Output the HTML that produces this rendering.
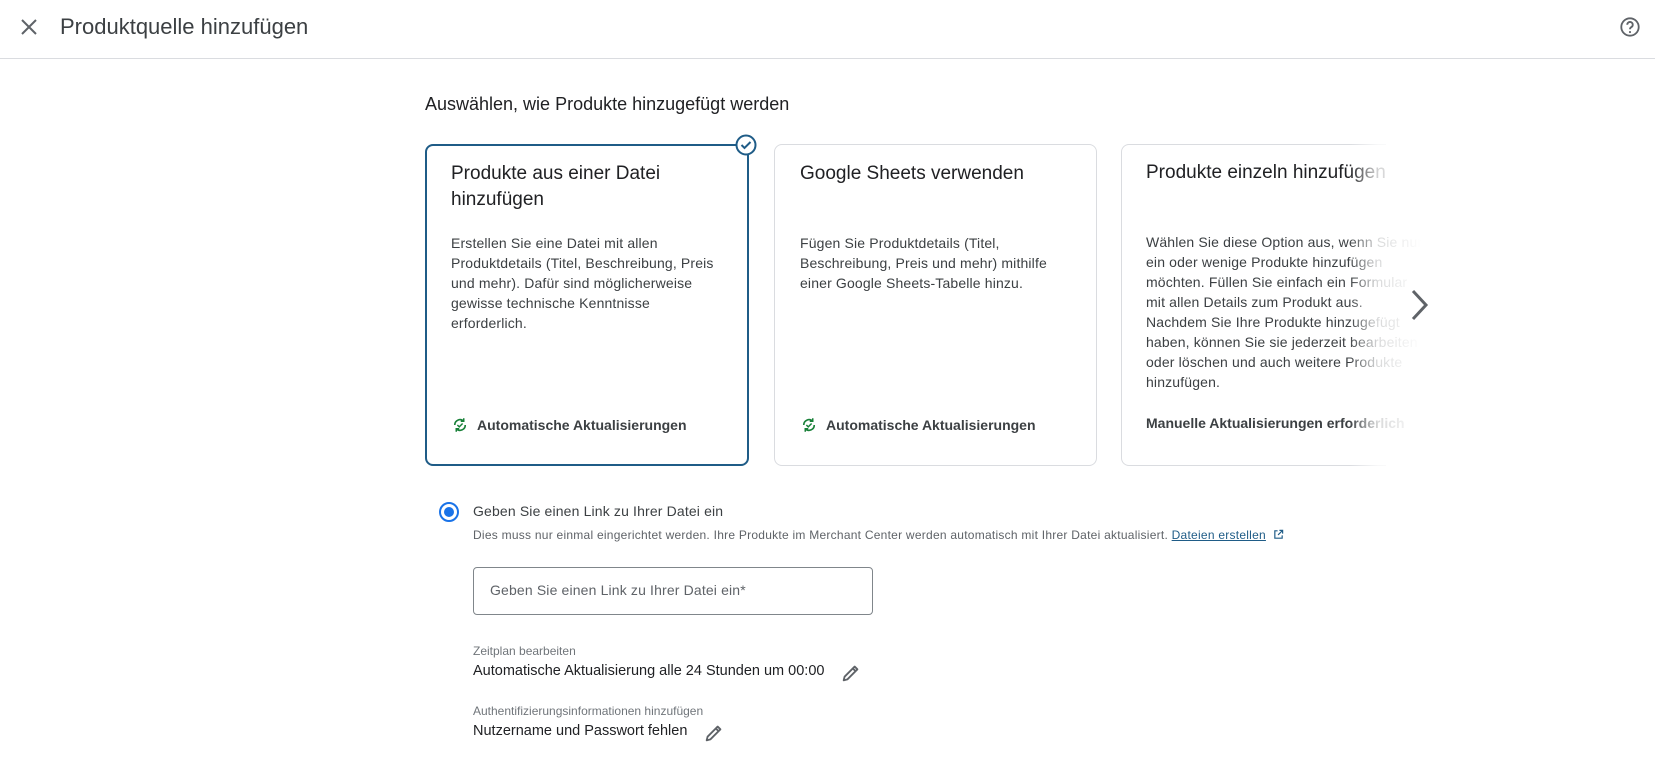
<!DOCTYPE html>
<html><head><meta charset="utf-8"><style>
*{margin:0;padding:0;box-sizing:border-box}
body{width:1655px;height:765px;overflow:hidden;background:#fff;font-family:"Liberation Sans",Arial,sans-serif;color:#202124;position:relative}
.abs{position:absolute}
.hdr{left:0;top:0;width:1655px;height:59px;border-bottom:1px solid #dadce0}
.card{position:absolute;top:144px;height:322px;border:1px solid #dadce0;border-radius:8px;background:#fff}
.card.sel{border:2px solid #1f5c87}
.ct{position:absolute;left:25px;top:16px;font-size:19px;line-height:26px;color:#202124;width:280px}
.cd{position:absolute;left:25px;top:88px;font-size:14px;line-height:20px;color:#3c4043;white-space:nowrap;letter-spacing:0.15px}
.cf{position:absolute;left:25px;top:271px;font-size:14px;font-weight:bold;color:#3c4043;display:flex;align-items:center;gap:8px;white-space:nowrap}
.lbl{font-size:12px;color:#70757a}
.val{font-size:14.5px;color:#202124}
</style></head><body>
<div class="abs hdr"></div>
<svg class="abs" style="left:19px;top:17px" width="20" height="20" viewBox="0 0 20 20"><path d="M3 3L17 17M17 3L3 17" stroke="#5f6368" stroke-width="2"/></svg>
<div class="abs" style="left:60px;top:14px;font-size:22px;color:#3c4043">Produktquelle hinzufügen</div>
<svg class="abs" style="left:1619px;top:16px" width="22" height="22" viewBox="0 0 24 24"><circle cx="12" cy="12" r="9.5" fill="none" stroke="#5f6368" stroke-width="2"/><path d="M9 9.5a3 3 0 1 1 4.5 2.6c-1 .6-1.5 1.2-1.5 2.4" fill="none" stroke="#5f6368" stroke-width="2"/><circle cx="12" cy="17.5" r="1.2" fill="#5f6368"/></svg>

<div class="abs" style="left:425px;top:94px;font-size:18px;color:#202124">Auswählen, wie Produkte hinzugefügt werden</div>

<div class="card sel" style="left:425px;width:324px">
<div class="ct" style="left:24px;top:15px">Produkte aus einer Datei<br>hinzufügen</div>
<div class="cd" style="left:24px;top:87px">Erstellen Sie eine Datei mit allen<br>Produktdetails (Titel, Beschreibung, Preis<br>und mehr). Dafür sind möglicherweise<br>gewisse technische Kenntnisse<br>erforderlich.</div>
<div class="cf" style="left:24px;top:270px"><svg width="18" height="18" viewBox="0 0 24 24"><path d="M5 12a7 7 0 0 1 12-5M19 12a7 7 0 0 1-12 5" fill="none" stroke="#188038" stroke-width="2.2"/><path d="M17 3v4h-4M7 21v-4h4" fill="none" stroke="#188038" stroke-width="2"/><path d="M8.5 12l2.5 2.5 4.5-4.5" fill="none" stroke="#188038" stroke-width="2"/></svg>Automatische Aktualisierungen</div>
</div>
<svg class="abs" style="left:735px;top:134px" width="22" height="22" viewBox="0 0 22 22"><circle cx="11" cy="11" r="9.5" fill="#fff" stroke="#1f5c87" stroke-width="2"/><path d="M6.5 11l3 3 6-6" fill="none" stroke="#1f5c87" stroke-width="2"/></svg>

<div class="card" style="left:774px;width:323px">
<div class="ct">Google Sheets verwenden</div>
<div class="cd" style="top:88px">Fügen Sie Produktdetails (Titel,<br>Beschreibung, Preis und mehr) mithilfe<br>einer Google Sheets-Tabelle hinzu.</div>
<div class="cf"><svg width="18" height="18" viewBox="0 0 24 24"><path d="M5 12a7 7 0 0 1 12-5M19 12a7 7 0 0 1-12 5" fill="none" stroke="#188038" stroke-width="2.2"/><path d="M17 3v4h-4M7 21v-4h4" fill="none" stroke="#188038" stroke-width="2"/><path d="M8.5 12l2.5 2.5 4.5-4.5" fill="none" stroke="#188038" stroke-width="2"/></svg>Automatische Aktualisierungen</div>
</div>

<div class="abs" style="left:1121px;top:144px;width:265px;height:322px;overflow:hidden">
<div class="card" style="left:0;top:0;width:323px"></div>
</div>
<div class="abs" style="left:1121px;top:144px;width:300px;height:322px;overflow:hidden">
<div class="ct" style="width:300px">Produkte einzeln hinzufügen</div>
<div class="cd" style="top:88px">Wählen Sie diese Option aus, wenn Sie nur<br>ein oder wenige Produkte hinzufügen<br>möchten. Füllen Sie einfach ein Formular<br>mit allen Details zum Produkt aus.<br>Nachdem Sie Ihre Produkte hinzugefügt<br>haben, können Sie sie jederzeit bearbeiten<br>oder löschen und auch weitere Produkte<br>hinzufügen.</div>
<div class="cf">Manuelle Aktualisierungen erforderlich</div>
<div class="abs" style="left:228px;top:0;width:72px;height:322px;background:linear-gradient(to right,rgba(255,255,255,0),rgba(255,255,255,0.8) 40%,#fff)"></div>
</div>
<svg class="abs" style="left:1408px;top:288px" width="22" height="34" viewBox="0 0 22 34"><path d="M5 3l13 14L5 31" fill="none" stroke="#5f6368" stroke-width="3"/></svg>

<svg class="abs" style="left:438px;top:501px" width="22" height="22" viewBox="0 0 22 22"><circle cx="11" cy="11" r="9" fill="none" stroke="#1a73e8" stroke-width="2"/><circle cx="11" cy="11" r="5" fill="#1a73e8"/></svg>
<div class="abs" style="left:473px;top:503px;font-size:14px;color:#3c4043;letter-spacing:0.15px">Geben Sie einen Link zu Ihrer Datei ein</div>
<div class="abs" style="left:473px;top:528px;font-size:12px;letter-spacing:0.25px;color:#5f6368;white-space:nowrap">Dies muss nur einmal eingerichtet werden. Ihre Produkte im Merchant Center werden automatisch mit Ihrer Datei aktualisiert. <span style="text-decoration:underline;color:#1f5c87">Dateien erstellen</span> <svg width="11" height="11" viewBox="0 0 12 12" style="vertical-align:-1px;margin-left:3px"><path d="M5 2H2v8h8V7M7 1.5h3.5V5M10.5 1.5L5.5 6.5" fill="none" stroke="#1f5c87" stroke-width="1.3"/></svg></div>

<div class="abs" style="left:473px;top:567px;width:400px;height:48px;border:1px solid #80868b;border-radius:4px"></div>
<div class="abs" style="left:490px;top:582px;font-size:14px;color:#5f6368;letter-spacing:0.15px">Geben Sie einen Link zu Ihrer Datei ein*</div>

<div class="abs lbl" style="left:473px;top:644px">Zeitplan bearbeiten</div>
<div class="abs val" style="left:473px;top:663px">Automatische Aktualisierung alle 24 Stunden um 00:00</div>
<svg class="abs" style="left:840px;top:662px" width="22" height="22" viewBox="0 0 24 24"><path d="M4 20l1-4L16 5l3 3L8 19z M14 7l3 3" fill="none" stroke="#5f6368" stroke-width="2" stroke-linejoin="round"/></svg>
<div class="abs lbl" style="left:473px;top:704px">Authentifizierungsinformationen hinzufügen</div>
<div class="abs val" style="left:473px;top:723px">Nutzername und Passwort fehlen</div>
<svg class="abs" style="left:703px;top:722px" width="22" height="22" viewBox="0 0 24 24"><path d="M4 20l1-4L16 5l3 3L8 19z M14 7l3 3" fill="none" stroke="#5f6368" stroke-width="2" stroke-linejoin="round"/></svg>
</body></html>
